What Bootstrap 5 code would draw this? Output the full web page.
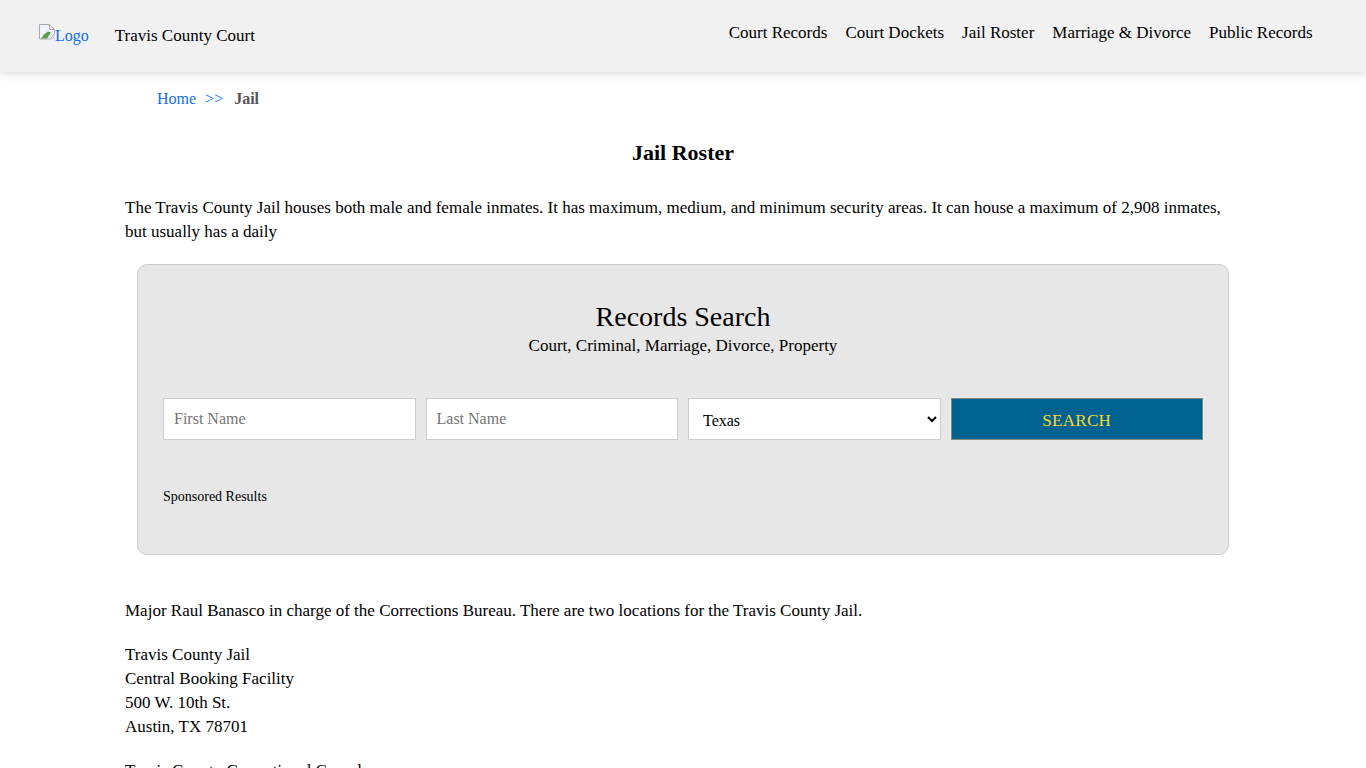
<!DOCTYPE html>
<html lang="en">
<head>
    <meta charset="UTF-8">
    <meta name="viewport" content="width=device-width, initial-scale=1.0">
    <title>Jail Roster - Travis County Court</title>
    <link rel="stylesheet" href="https://cdn.jsdelivr.net/npm/bootstrap@5.3.0/dist/css/bootstrap.min.css">
    <style>
        body {
            font-family: "Liberation Serif", "Times New Roman", serif;
            font-size: 17px;
            line-height: 24px;
            color: #000;
            overflow: hidden;
            height: 768px;
        }
        .site-header {
            height: 72px;
            background-color: #f1f1f1;
            box-shadow: 0 2px 8px rgba(0, 0, 0, .15);
            padding: 0 53px 0 39px;
        }
        .logo-link {
            color: #0d6efd;
            font-size: 16px;
            line-height: 24px;
            text-decoration: none;
            margin-top: -1px;
        }
        .logo-link svg {
            vertical-align: 1px;
        }
        .site-name {
            color: #000;
            text-decoration: none;
            margin-left: 26px;
            margin-top: -1px;
        }
        .site-links {
            gap: 18px;
            margin-top: -7px;
            margin-right: .5px;
        }
        .site-links a {
            color: #000;
            text-decoration: none;
        }
        .crumbs {
            font-size: 16px;
            padding: 15px 0 0 32px;
            height: 52px;
        }
        .crumbs a {
            color: #0d6efd;
            text-decoration: none;
        }
        .crumbs b {
            color: #555;
            margin-left: 2px;
        }
        .crumb-sep {
            color: #0d6efd;
            margin: 0 5px;
        }
        .page-title {
            font-family: inherit;
            font-size: 22px;
            font-weight: 700;
            line-height: 30px;
            text-align: center;
            margin: 14px 0 28px;
        }
        .para-gap {
            margin-bottom: 20px;
        }
        .search-box {
            background-color: #e7e7e7;
            border: 1px solid #ccc;
            border-radius: 10px;
            margin: 0 12px 44px;
            padding: 34px 25px 0;
            height: 291px;
        }
        .search-title {
            font-family: inherit;
            font-size: 28px;
            font-weight: 400;
            line-height: 35px;
            margin: 0;
        }
        .search-fields {
            --bs-gutter-x: 10px;
            margin-top: 40px;
        }
        .search-fields .form-control,
        .search-fields .form-select {
            height: 42px;
            border: 1px solid #ccc;
            border-radius: 0;
            font-size: 16px;
            color: #000;
        }
        .search-fields .form-control {
            padding: 0 10px;
        }
        .search-fields .form-control::placeholder {
            color: #757575;
        }
        .search-fields .form-select {
            appearance: auto;
            background-image: none;
            padding: 2px 0 0 10px;
        }
        .search-btn {
            display: block;
            width: 100%;
            height: 42px;
            padding: 9px 12px 6px;
            background-color: #006291;
            border: 1px solid #7d8a80;
            border-radius: 0;
            color: #ffd724;
            font-size: 17px;
            letter-spacing: .3px;
        }
        .sponsored {
            font-size: 14px;
            margin-top: 45px;
        }
    </style>
</head>
<body>
    <!-- Header -->
    <header class="site-header d-flex align-items-center justify-content-between">
        <div class="d-flex align-items-center">
            <a class="logo-link" href="#"><svg width="16" height="16" viewBox="0 0 16 16" role="img" aria-label="broken image"><path d="M.5.5h10l5 5v4l-4 5.500H.5z" fill="#eef3fb" stroke="#a8a8a8"/><path d="M10.500.5v5h5z" fill="#f6f6f6" stroke="#a8a8a8"/><path d="M2 14.500l3-4 4-3 3 1-4 6z" fill="#5c9e45"/><path d="M11 15.500l4.500-5v5z" fill="#d8d8d8"/></svg>Logo</a>
            <a class="site-name" href="#">Travis County Court</a>
        </div>
        <nav class="site-links d-flex">
            <a href="#">Court Records</a>
            <a href="#">Court Dockets</a>
            <a href="#">Jail Roster</a>
            <a href="#">Marriage &amp; Divorce</a>
            <a href="#">Public Records</a>
        </nav>
    </header>

    <div class="container">
        <!-- Breadcrumb -->
        <div class="crumbs"><a href="#">Home</a> <span class="crumb-sep">&gt;&gt;</span> <b>Jail</b></div>

        <h1 class="page-title">Jail Roster</h1>

        <p class="para-gap">The Travis County Jail houses both male and female inmates. It has maximum, medium, and minimum security areas. It can house a maximum of 2,908 inmates, but usually has a daily</p>

        <!-- Search box -->
        <div class="search-box">
            <div class="text-center">
                <h2 class="search-title">Records Search</h2>
                <div>Court, Criminal, Marriage, Divorce, Property</div>
            </div>
            <form class="row search-fields">
                <div class="col-3"><input type="text" class="form-control" placeholder="First Name"></div>
                <div class="col-3"><input type="text" class="form-control" placeholder="Last Name"></div>
                <div class="col-3">
                    <select class="form-select">
                        <option>Texas</option>
                    </select>
                </div>
                <div class="col-3"><button type="button" class="btn search-btn">SEARCH</button></div>
            </form>
            <div class="sponsored">Sponsored Results</div>
        </div>

        <p class="para-gap">Major Raul Banasco in charge of the Corrections Bureau. There are two locations for the Travis County Jail.</p>
        <p class="para-gap">Travis County Jail<br>Central Booking Facility<br>500 W. 10th St.<br>Austin, TX 78701</p>
        <p>Travis County Correctional Complex</p>
    </div>

    <script src="https://cdn.jsdelivr.net/npm/bootstrap@5.3.0/dist/js/bootstrap.bundle.min.js"></script>
</body>
</html>
